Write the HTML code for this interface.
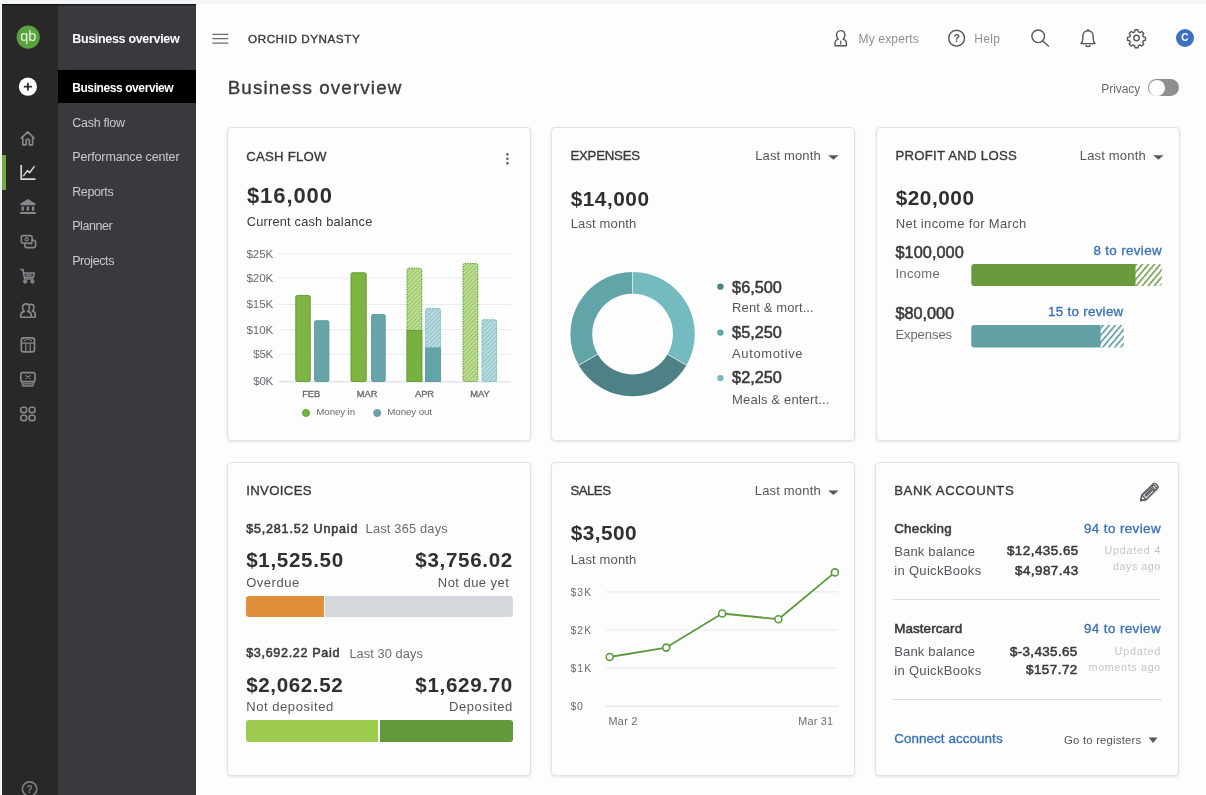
<!DOCTYPE html>
<html lang="en">
<head>
<meta charset="utf-8">
<title>Business overview</title>
<style>
*{box-sizing:border-box;margin:0;padding:0}
html,body{width:1206px;height:795px;overflow:hidden}
body{position:relative;background:#fdfdfd;font-family:"Liberation Sans",sans-serif;color:#393a3d}
.abs{position:absolute}
.t{position:absolute;white-space:nowrap;line-height:1;transform:translateY(-50%)}
#topstrip{left:0;top:0;width:1206px;height:4px;background:#f1f5f6}
#leftstrip{left:0;top:0;width:2px;height:795px;background:#f1f5f6}
#sb1{left:2px;top:4px;width:56px;height:791px;background:#282828}
#sb2{left:58px;top:4px;width:138px;height:791px;background:#393a3d}
#sbshadow{left:2px;top:4px;width:194px;height:2px;background:linear-gradient(#0c0c0c,rgba(12,12,12,0))}
#active{left:58px;top:70px;width:138px;height:33px;background:#000}
#activebar{left:2px;top:154.5px;width:3.6px;height:35px;background:#6fae3e}
.card{position:absolute;width:304px;height:314px;background:#fdfdfe;border:1px solid #e2e3e8;border-radius:4px;box-shadow:0 1px 3px rgba(0,0,0,.10)}
.bar{position:absolute;border-radius:3px;overflow:hidden}
.hr{position:absolute;height:1px;background:#dcdde0}
#gfx{position:absolute;left:0;top:0;width:1206px;height:795px;overflow:visible}
</style>
</head>
<body>
<div class="abs" id="topstrip"></div>
<div class="abs" id="leftstrip"></div>
<div class="abs" id="sb1"></div>
<div class="abs" id="sb2"></div>
<div class="abs" id="sbshadow"></div>
<div class="abs" id="active"></div>
<div class="abs" id="activebar"></div>

<div class="card" style="left:227px;top:127px"></div>
<div class="card" style="left:551px;top:127px"></div>
<div class="card" style="left:875.5px;top:127px"></div>
<div class="card" style="left:227px;top:462px"></div>
<div class="card" style="left:551px;top:462px"></div>
<div class="card" style="left:875px;top:462px"></div>

<!-- privacy toggle + avatar -->
<div class="abs" style="left:1147.8px;top:78.7px;width:31.6px;height:17.6px;border-radius:9px;background:#8e8e90"></div>
<div class="abs" style="left:1148.6px;top:79.5px;width:16px;height:16px;border-radius:8px;background:#fff"></div>
<div class="abs" style="left:1175.8px;top:29.2px;width:18px;height:18px;border-radius:9px;background:#3e6fc2"></div>

<!-- invoices bars -->
<div class="bar" style="left:245.7px;top:595.6px;width:267.1px;height:21.2px;background:#fff"><div class="abs" style="left:0;top:0;width:78px;height:100%;background:#e0903a"></div><div class="abs" style="left:79.4px;top:0;right:0;height:100%;background:#d4d7dc"></div></div>
<div class="bar" style="left:245.7px;top:720px;width:267.1px;height:21.9px;background:#fff"><div class="abs" style="left:0;top:0;width:132.8px;height:100%;background:#9ccb4d"></div><div class="abs" style="left:134.3px;top:0;right:0;height:100%;background:#62993c"></div></div>

<!-- bank dividers -->
<div class="hr" style="left:893px;top:599px;width:267px"></div>
<div class="hr" style="left:893px;top:698.5px;width:269px"></div>

<div id="layer" style="position:absolute;left:0;top:0;width:1206px;height:795px;will-change:transform">
<svg id="gfx" width="1206" height="795" viewBox="0 0 1206 795">
<defs>
<pattern id="hg" width="3" height="3" patternUnits="userSpaceOnUse" patternTransform="rotate(45)"><rect width="3" height="3" fill="#c3e09c"/><rect width="1.3" height="3" fill="#97c765"/></pattern>
<pattern id="ht" width="3" height="3" patternUnits="userSpaceOnUse" patternTransform="rotate(45)"><rect width="3" height="3" fill="#bfe0e3"/><rect width="1.3" height="3" fill="#8fc3c8"/></pattern>
<pattern id="pg" width="4.6" height="4.6" patternUnits="userSpaceOnUse" patternTransform="rotate(40)"><rect width="4.6" height="4.6" fill="#fff"/><rect width="1.5" height="4.6" fill="#6a9a3e"/></pattern>
<pattern id="pt" width="4.6" height="4.6" patternUnits="userSpaceOnUse" patternTransform="rotate(40)"><rect width="4.6" height="4.6" fill="#fff"/><rect width="1.5" height="4.6" fill="#4f9297"/></pattern>
</defs>

<!-- CASH FLOW chart -->
<g stroke="#e9eaed" stroke-width="1">
<path d="M279 254H511M279 278H511M279 304.5H511M279 329.7H511M279 354.3H511"/>
<path d="M279 381.8H511" stroke="#d4d7dc"/>
</g>
<g stroke-width="1">
<rect x="295.8" y="295.4" width="14.4" height="86.1" rx="1.5" fill="#7db442" stroke="#679c37"/>
<rect x="314.6" y="320.7" width="14.3" height="60.8" rx="1.5" fill="#68a4a8" stroke="#5f9da2"/>
<rect x="351" y="272.8" width="15.2" height="108.7" rx="1.5" fill="#7db442" stroke="#679c37"/>
<rect x="371.6" y="314.5" width="13.6" height="67" rx="1.5" fill="#68a4a8" stroke="#5f9da2"/>
<rect x="407" y="268.2" width="14.8" height="113.3" rx="1.5" fill="url(#hg)" stroke="#5f9a35" stroke-dasharray="1.5 1"/>
<rect x="407" y="330.5" width="14.8" height="51" fill="#77b241" stroke="#679c37"/>
<rect x="425.6" y="308.5" width="14.8" height="73" rx="1.5" fill="url(#ht)" stroke="#6fb0b6" stroke-dasharray="1.5 1"/>
<rect x="425.6" y="348" width="14.8" height="33.5" fill="#64a3a8" stroke="#5f9da2"/>
<rect x="463" y="263.6" width="14.8" height="117.9" rx="1.5" fill="url(#hg)" stroke="#5f9a35" stroke-dasharray="1.5 1"/>
<rect x="482" y="319.7" width="14.5" height="61.8" rx="1.5" fill="url(#ht)" stroke="#6fb0b6" stroke-dasharray="1.5 1"/>
</g>
<circle cx="306" cy="413" r="3.6" fill="#74b03f" stroke="#5f9a35" stroke-width=".8"/>
<circle cx="377.2" cy="413" r="3.6" fill="#68a4a8" stroke="#5a969b" stroke-width=".8"/>
<!-- kebab -->
<g fill="#55575c"><circle cx="507.4" cy="154.2" r="1.25"/><circle cx="507.4" cy="158.7" r="1.25"/><circle cx="507.4" cy="163.2" r="1.25"/></g>

<!-- EXPENSES donut -->
<g fill="none" stroke-width="21.8" transform="translate(632.6 334.1)">
<path d="M0 -51.3A51.3 51.3 0 0 1 44.43 25.65" stroke="#74bbbf"/>
<path d="M44.43 25.65A51.3 51.3 0 0 1 -44.43 25.65" stroke="#4e8185"/>
<path d="M-44.43 25.65A51.3 51.3 0 0 1 0 -51.3" stroke="#62a5a9"/>
<path d="M0 -40V-63M34.6 20L54.6 31.5M-34.6 20L-54.6 31.5" stroke="#e9f3f3" stroke-width=".8"/>
</g>
<circle cx="720.4" cy="286.6" r="3.2" fill="#4e8185"/>
<circle cx="720.4" cy="332.6" r="3.2" fill="#62a5a9"/>
<circle cx="720.4" cy="378.1" r="3.2" fill="#74bbbf"/>
<!-- carets -->
<g fill="#55575c">
<path d="M828.1 155.2h10.5l-5.25 4.6z"/>
<path d="M1153.1 155.2h10.5l-5.25 4.6z"/>
<path d="M828.1 490.4h10.5l-5.25 4.6z"/>
<path d="M1148.7 737.4h8.8l-4.4 5.6z"/>
</g>

<!-- PROFIT AND LOSS bars -->
<path d="M1133 264.1h25.8a3 3 0 0 1 3 3v15.9a3 3 0 0 1-3 3h-25.8z" fill="url(#pg)"/>
<path d="M974.3 264.1h161.2v21.9h-161.2a3 3 0 0 1-3-3v-15.9a3 3 0 0 1 3-3z" fill="#699a3d"/>
<path d="M1098 325h22.8a3 3 0 0 1 3 3v16.4a3 3 0 0 1-3 3h-22.8z" fill="url(#pt)"/>
<path d="M974.3 325h126.3v22.4h-126.3a3 3 0 0 1-3-3v-16.4a3 3 0 0 1 3-3z" fill="#62a0a3"/>

<!-- SALES chart -->
<g stroke="#e6e8eb" stroke-width="1">
<path d="M606 591.8H838M606 629.8H838M606 667.8H838"/>
<path d="M606 706.3H838" stroke="#dcdfe2"/>
</g>
<path d="M609.7 657L666.2 647.6L722.2 613.5L778.4 619.2L834.9 572.4" fill="none" stroke="#5e9a3c" stroke-width="1.8" stroke-linejoin="round"/>
<g fill="#fff" stroke="#5e9a3c" stroke-width="1.6">
<circle cx="609.7" cy="657" r="3.5"/><circle cx="666.2" cy="647.6" r="3.5"/><circle cx="722.2" cy="613.5" r="3.5"/><circle cx="778.4" cy="619.2" r="3.5"/><circle cx="834.9" cy="572.4" r="3.5"/>
</g>
<!--ICONS_START--><!-- sidebar icons -->
<circle cx="28.2" cy="37.1" r="11.6" fill="#5aa23d"/>
<text x="28.2" y="40.9" text-anchor="middle" font-family="Liberation Sans, sans-serif" font-size="14.5" fill="#e6f3dc">qb</text>
<circle cx="27.9" cy="86.7" r="9.1" fill="#fff"/>
<path d="M27.9 83.4v6.6M24.6 86.7h6.6" stroke="#282828" stroke-width="1.7" stroke-linecap="round"/>
<g fill="none" stroke="#85878c" stroke-width="1.650" stroke-linejoin="round" stroke-linecap="round">
<!-- home -->
<path d="M21.3 138.2L27.7 131.8L34.1 138.2M22.8 137v7.8h3.3v-4.2a1.6 1.6 0 0 1 3.2 0v4.2h3.3V137"/>
<!-- bank -->
<path d="M21 204.300L27.900 200L34.800 204.300Z" fill="#85878c"/>
<path d="M22.700 206.400v4.400M27.900 206.400v4.400M33.100 206.400v4.400" stroke-width="2.300" stroke-linecap="butt"/>
<path d="M20.800 212.900h14.200" stroke-width="2"/>
<!-- money -->
<rect x="21.3" y="235.6" width="10.8" height="7.6" rx="1.6"/>
<circle cx="26.7" cy="239.4" r="1.6" stroke-width="1.2"/>
<path d="M24.8 243.2v2.6a1.8 1.8 0 0 0 1.8 1.8h7.2a1.8 1.8 0 0 0 1.8-1.8v-3.6a1.8 1.8 0 0 0-1.8-1.8h-1.6"/>
<path d="M28.4 243.8c1.2-1.2 2.6-.6 3.4.4" stroke-width="1.2"/>
<!-- cart -->
<path d="M21 269.6h2l1.6 9.4h8.4M24 273h10.2l-1 4.2h-8.6M26.4 275h4.6" />
<circle cx="25.2" cy="281.6" r="1.3"/><circle cx="32.4" cy="281.6" r="1.3"/>
<!-- people -->
<path d="M20.8 317.2v-2.2c0-2 1.6-3.2 3.6-3.6c-1.2-.8-1.8-2-1.8-3.6c0-2.4 1.4-4 3.4-4s3.4 1.6 3.4 4c0 1.600-.6 2.800-1.800 3.600c2 .4 3.600 1.600 3.600 3.600v2.200z"/>
<path d="M29.6 304.6c.4-.2 .9-.3 1.400-.3c1.800 0 3 1.400 3 3.500c0 1.400-.6 2.500-1.600 3.200c1.700.4 2.800 1.400 2.800 3.200v3h-2.800"/>
<!-- calendar -->
<rect x="21.3" y="337.9" width="13.2" height="14" rx="2.4"/>
<path d="M21.3 343.2h13.200M25.800 343.200v8.700M30.200 343.200v8.700" stroke-width="1.200"/>
<path d="M24.200 340.800c2-1.400 5.400-1.400 7.400 0" stroke-width="1.200"/>
<!-- monitor -->
<rect x="20.800" y="372.600" width="14.200" height="9" rx="1.800"/>
<path d="M21.600 381.600l1.400 4.400h9.800l1.400-4.400M23 383.900h9.800" stroke-width="1.300"/>
<path d="M25.600 378.600l4.600-3M25.600 375.600l4.600 3" stroke-width="1.100"/>
<!-- grid -->
<rect x="20.800" y="407.200" width="5.800" height="5.400" rx="2.200"/>
<rect x="29.200" y="407.200" width="5.800" height="5.400" rx="2.200"/>
<rect x="20.800" y="415.200" width="5.800" height="5.400" rx="2.200"/>
<rect x="29.200" y="415.200" width="5.800" height="5.400" rx="2.200"/>
<!-- bottom help -->
<circle cx="29.600" cy="789" r="7.200" stroke="#7e7f83"/>
</g>
<text x="29.600" y="792.800" text-anchor="middle" font-family="Liberation Sans, sans-serif" font-weight="bold" font-size="10" fill="#7e7f83">?</text>
<!-- active chart icon -->
<g fill="none" stroke="#d6d8dc" stroke-width="1.700" stroke-linejoin="round" stroke-linecap="round">
<path d="M21.200 165.600v13.600h13.600"/>
<path d="M23.600 175.600l3.800-5l2.200 2.200l4.600-6.200" stroke-width="1.500"/>
</g>
<!-- topbar icons -->
<g stroke="#6b6c72" stroke-width="1.300" fill="none">
<path d="M212.400 34.300h15.900M212.400 38.700h15.900M212.400 43.200h15.900"/>
</g>
<g fill="none" stroke="#55575c" stroke-width="1.400" stroke-linejoin="round" stroke-linecap="round">
<!-- person -->
<path d="M835 45.800v-2.400c0-2.200 1.400-3.600 3.400-4.200c-1.200-.9-1.900-2.300-1.900-4c0-2.700 1.700-4.600 4.200-4.600s4.200 1.900 4.200 4.600c0 1.700-.7 3.100-1.900 4c2 .6 3.400 2 3.400 4.200v2.400z"/>
<path d="M840.700 41v3" stroke-width="1.200"/>
<!-- help -->
<circle cx="956.600" cy="38.200" r="7.900"/>
<!-- search -->
<circle cx="1038.200" cy="36.300" r="6.300"/>
<path d="M1042.800 40.900l5.600 5.200"/>
<!-- bell -->
<path d="M1081 43.600c1.400-1.200 1.800-2.800 1.800-5.200v-2.200c0-3.200 2.200-5.400 5.200-5.400s5.200 2.200 5.200 5.400v2.200c0 2.400.4 4 1.800 5.200z"/>
<path d="M1088 29.400v1.400M1086 45.200a2.100 2.100 0 0 0 4 0"/>
<!-- gear -->
<circle cx="1136.500" cy="38" r="2.700"/>
<path d="M1135.100 29.800h2.800l.5 2.100l1.500.7l1.900-1.100l2 2l-1.100 1.900l.7 1.500l2.100.5v2.800l-2.100.5l-.7 1.500l1.100 1.900l-2 2l-1.900-1.100l-1.500.7l-.5 2.100h-2.800l-.5-2.100l-1.500-.7l-1.900 1.100l-2-2l1.100-1.900l-.7-1.500l-2.100-.5v-2.800l2.100-.5l.7-1.500l-1.100-1.900l2-2l1.900 1.100l1.500-.7z"/>
<!-- pencil -->
<path d="M1140.600 500.800l1.400-5l9.800-9.800a2.200 2.200 0 0 1 3.100 0l1 1a2.200 2.200 0 0 1 0 3.100l-9.800 9.800zM1142.300 495.600l3.600 3.600M1150.400 487.400l3.600 3.600M1145.200 496l7-7" stroke-width="1.300"/>
</g>
<!-- pencil -->
<g transform="translate(1140.1 500.9) rotate(-44)" fill="none" stroke="#66676c" stroke-width="1.5" stroke-linejoin="round" stroke-linecap="round">
<path d="M0.6 0L5.2 -3.1H21a2.2 2.2 0 0 1 2.200 2.200V0.900a2.200 2.200 0 0 1-2.200 2.200H5.200Z"/>
<path d="M18.500 -3.100V3.100"/>
<rect x="7.600" y="-1.100" width="8.600" height="2.200" rx="1.100" stroke-width="1"/>
<path d="M0.6 0L2.8 -1.3V1.3Z" fill="#66676c" stroke-width=".8"/>
</g>
<text x="956.600" y="42" text-anchor="middle" font-family="Liberation Sans, sans-serif" font-weight="bold" font-size="10.500" fill="#55575c">?</text>
<!--ICONS_END-->
</svg>

<div class="t" style="font-size:12.5px;color:#ffffff;top:38.80px;font-weight:bold;letter-spacing:-0.316px;left:72.2px;">Business overview</div>
<div class="t" style="font-size:12px;color:#ffffff;top:88.00px;font-weight:bold;letter-spacing:-0.410px;left:72.2px;">Business overview</div>
<div class="t" style="font-size:12.5px;color:#c8cace;top:122.90px;letter-spacing:-0.261px;left:72.2px;">Cash flow</div>
<div class="t" style="font-size:12.5px;color:#c8cace;top:157.40px;letter-spacing:-0.140px;left:72.2px;">Performance center</div>
<div class="t" style="font-size:12.5px;color:#c8cace;top:191.90px;letter-spacing:-0.380px;left:72.2px;">Reports</div>
<div class="t" style="font-size:12.5px;color:#c8cace;top:226.10px;letter-spacing:-0.432px;left:72.2px;">Planner</div>
<div class="t" style="font-size:12.5px;color:#c8cace;top:260.60px;letter-spacing:-0.422px;left:72.2px;">Projects</div>
<div class="t" style="font-size:11.7px;color:#393a3d;top:39.20px;-webkit-text-stroke:.35px currentColor;letter-spacing:0.549px;left:248px;">ORCHID DYNASTY</div>
<div class="t" style="font-size:18.8px;color:#393a3d;top:87.80px;-webkit-text-stroke:.35px currentColor;letter-spacing:1.128px;left:227.7px;">Business overview</div>
<div class="t" style="font-size:12px;color:#8d9096;top:39.00px;letter-spacing:0.168px;left:858.5px;">My experts</div>
<div class="t" style="font-size:12px;color:#8d9096;top:39.00px;letter-spacing:0.371px;left:974.2px;">Help</div>
<div class="t" style="font-size:12px;color:#6b6c72;top:89.00px;letter-spacing:-0.057px;left:1101.3px;">Privacy</div>
<div class="t" style="font-size:10px;color:#ffffff;top:38.20px;font-weight:bold;left:1184.8px;transform:translate(-50%,-50%);">C</div>
<div class="t" style="font-size:13.2px;color:#393a3d;top:157.10px;-webkit-text-stroke:.35px currentColor;letter-spacing:0.237px;left:246.2px;">CASH FLOW</div>
<div class="t" style="font-size:22px;color:#2f3033;top:196.00px;font-weight:bold;letter-spacing:0.928px;left:246.9px;">$16,000</div>
<div class="t" style="font-size:12.8px;color:#393a3d;top:221.60px;letter-spacing:0.208px;left:246.7px;">Current cash balance</div>
<div class="t" style="font-size:11.6px;color:#6b6c72;top:253.70px;letter-spacing:-0.059px;right:932.76px;">$25K</div>
<div class="t" style="font-size:11.6px;color:#6b6c72;top:277.80px;letter-spacing:-0.059px;right:932.76px;">$20K</div>
<div class="t" style="font-size:11.6px;color:#6b6c72;top:304.30px;letter-spacing:-0.059px;right:932.76px;">$15K</div>
<div class="t" style="font-size:11.6px;color:#6b6c72;top:329.50px;letter-spacing:-0.059px;right:932.76px;">$10K</div>
<div class="t" style="font-size:11.6px;color:#6b6c72;top:354.10px;letter-spacing:-0.270px;right:932.97px;">$5K</div>
<div class="t" style="font-size:11.6px;color:#6b6c72;top:381.30px;letter-spacing:-0.270px;right:932.97px;">$0K</div>
<div class="t" style="font-size:9.3px;color:#6b6c72;top:394.90px;-webkit-text-stroke:.35px currentColor;left:311.2px;transform:translate(-50%,-50%);">FEB</div>
<div class="t" style="font-size:9.3px;color:#6b6c72;top:394.90px;-webkit-text-stroke:.35px currentColor;left:367.2px;transform:translate(-50%,-50%);">MAR</div>
<div class="t" style="font-size:9.3px;color:#6b6c72;top:394.90px;-webkit-text-stroke:.35px currentColor;left:424.5px;transform:translate(-50%,-50%);">APR</div>
<div class="t" style="font-size:9.3px;color:#6b6c72;top:394.90px;-webkit-text-stroke:.35px currentColor;left:480px;transform:translate(-50%,-50%);">MAY</div>
<div class="t" style="font-size:9.8px;color:#6b6c72;top:412.20px;letter-spacing:-0.138px;left:316.3px;">Money in</div>
<div class="t" style="font-size:9.8px;color:#6b6c72;top:412.20px;letter-spacing:-0.119px;left:387.3px;">Money out</div>
<div class="t" style="font-size:13.2px;color:#393a3d;top:155.80px;-webkit-text-stroke:.35px currentColor;letter-spacing:-0.201px;left:570.4px;">EXPENSES</div>
<div class="t" style="font-size:13px;color:#55575c;top:154.60px;letter-spacing:0.130px;left:755.2px;">Last month</div>
<div class="t" style="font-size:20.8px;color:#2f3033;top:198.80px;font-weight:bold;letter-spacing:0.519px;left:570.7px;">$14,000</div>
<div class="t" style="font-size:13px;color:#55575c;top:223.00px;letter-spacing:0.141px;left:570.7px;">Last month</div>
<div class="t" style="font-size:16.3px;color:#393a3d;top:286.50px;-webkit-text-stroke:.55px currentColor;letter-spacing:-0.003px;left:732.1px;">$6,500</div>
<div class="t" style="font-size:13px;color:#55575c;top:306.90px;letter-spacing:0.107px;left:732.1px;">Rent &amp; mort...</div>
<div class="t" style="font-size:16.3px;color:#393a3d;top:331.60px;-webkit-text-stroke:.55px currentColor;letter-spacing:-0.003px;left:732.1px;">$5,250</div>
<div class="t" style="font-size:13px;color:#55575c;top:352.50px;letter-spacing:0.595px;left:732.1px;">Automotive</div>
<div class="t" style="font-size:16.3px;color:#393a3d;top:377.40px;-webkit-text-stroke:.55px currentColor;letter-spacing:-0.003px;left:732.1px;">$2,250</div>
<div class="t" style="font-size:13px;color:#55575c;top:398.50px;letter-spacing:0.165px;left:732.1px;">Meals &amp; entert...</div>
<div class="t" style="font-size:13.2px;color:#393a3d;top:155.90px;-webkit-text-stroke:.35px currentColor;letter-spacing:0.261px;left:895.4px;">PROFIT AND LOSS</div>
<div class="t" style="font-size:13px;color:#55575c;top:154.60px;letter-spacing:0.175px;left:1079.8px;">Last month</div>
<div class="t" style="font-size:20.8px;color:#2f3033;top:197.70px;font-weight:bold;letter-spacing:0.519px;left:895.7px;">$20,000</div>
<div class="t" style="font-size:13px;color:#55575c;top:223.00px;letter-spacing:0.333px;left:895.7px;">Net income for March</div>
<div class="t" style="font-size:16.3px;color:#393a3d;top:252.00px;-webkit-text-stroke:.55px currentColor;letter-spacing:0.068px;left:895.4px;">$100,000</div>
<div class="t" style="font-size:13.4px;color:#3a72b8;top:251.10px;-webkit-text-stroke:.35px currentColor;letter-spacing:0.345px;right:44.06px;">8 to review</div>
<div class="t" style="font-size:13px;color:#6b6c72;top:273.20px;letter-spacing:0.332px;left:895.4px;">Income</div>
<div class="t" style="font-size:16.3px;color:#393a3d;top:312.80px;-webkit-text-stroke:.55px currentColor;letter-spacing:-0.027px;left:895.4px;">$80,000</div>
<div class="t" style="font-size:13.4px;color:#3a72b8;top:312.30px;-webkit-text-stroke:.35px currentColor;letter-spacing:0.291px;right:82.41px;">15 to review</div>
<div class="t" style="font-size:13px;color:#6b6c72;top:334.20px;letter-spacing:-0.056px;left:895.4px;">Expenses</div>
<div class="t" style="font-size:13.2px;color:#393a3d;top:490.90px;-webkit-text-stroke:.35px currentColor;letter-spacing:0.338px;left:246.2px;">INVOICES</div>
<div class="t" style="font-size:12.6px;color:#393a3d;top:529.00px;-webkit-text-stroke:.55px currentColor;letter-spacing:0.784px;left:246.2px;">$5,281.52 Unpaid</div>
<div class="t" style="font-size:12.8px;color:#6b6c72;top:528.50px;letter-spacing:0.201px;left:365.6px;">Last 365 days</div>
<div class="t" style="font-size:20.6px;color:#2f3033;top:560.40px;font-weight:bold;letter-spacing:0.672px;left:246.2px;">$1,525.50</div>
<div class="t" style="font-size:20.6px;color:#2f3033;top:560.40px;font-weight:bold;letter-spacing:0.672px;right:693.03px;">$3,756.02</div>
<div class="t" style="font-size:13px;color:#55575c;top:581.60px;letter-spacing:0.521px;left:246.2px;">Overdue</div>
<div class="t" style="font-size:13px;color:#55575c;top:581.60px;letter-spacing:0.450px;right:696.75px;">Not due yet</div>
<div class="t" style="font-size:12.6px;color:#393a3d;top:653.10px;-webkit-text-stroke:.55px currentColor;letter-spacing:0.659px;left:246.2px;">$3,692.22 Paid</div>
<div class="t" style="font-size:12.8px;color:#6b6c72;top:653.50px;letter-spacing:0.075px;left:349.4px;">Last 30 days</div>
<div class="t" style="font-size:20.6px;color:#2f3033;top:685.00px;font-weight:bold;letter-spacing:0.609px;left:246.2px;">$2,062.52</div>
<div class="t" style="font-size:20.6px;color:#2f3033;top:685.00px;font-weight:bold;letter-spacing:0.672px;right:693.03px;">$1,629.70</div>
<div class="t" style="font-size:13px;color:#55575c;top:706.20px;letter-spacing:0.564px;left:246.2px;">Not deposited</div>
<div class="t" style="font-size:13px;color:#55575c;top:706.20px;letter-spacing:0.607px;right:693.09px;">Deposited</div>
<div class="t" style="font-size:13.2px;color:#393a3d;top:491.10px;-webkit-text-stroke:.35px currentColor;letter-spacing:-0.483px;left:570.4px;">SALES</div>
<div class="t" style="font-size:13px;color:#55575c;top:489.80px;letter-spacing:0.175px;left:754.8px;">Last month</div>
<div class="t" style="font-size:20.8px;color:#2f3033;top:533.40px;font-weight:bold;letter-spacing:0.458px;left:570.7px;">$3,500</div>
<div class="t" style="font-size:13px;color:#55575c;top:558.80px;letter-spacing:0.141px;left:570.7px;">Last month</div>
<div class="t" style="font-size:10.4px;color:#6b6c72;top:592.50px;letter-spacing:1.100px;left:570.4px;">$3K</div>
<div class="t" style="font-size:10.4px;color:#6b6c72;top:630.80px;letter-spacing:1.100px;left:570.4px;">$2K</div>
<div class="t" style="font-size:10.4px;color:#6b6c72;top:668.60px;letter-spacing:1.100px;left:570.4px;">$1K</div>
<div class="t" style="font-size:10.4px;color:#6b6c72;top:706.90px;letter-spacing:0.938px;left:570.4px;">$0</div>
<div class="t" style="font-size:10.8px;color:#6b6c72;top:720.90px;letter-spacing:0.373px;left:608.5px;">Mar 2</div>
<div class="t" style="font-size:10.8px;color:#6b6c72;top:720.90px;letter-spacing:0.238px;right:372.66px;">Mar 31</div>
<div class="t" style="font-size:13.2px;color:#393a3d;top:490.90px;-webkit-text-stroke:.35px currentColor;letter-spacing:0.562px;left:894.2px;">BANK ACCOUNTS</div>
<div class="t" style="font-size:13.4px;color:#393a3d;top:529.00px;-webkit-text-stroke:.55px currentColor;letter-spacing:0.225px;left:894.2px;">Checking</div>
<div class="t" style="font-size:13.4px;color:#3a72b8;top:529.00px;-webkit-text-stroke:.35px currentColor;letter-spacing:0.400px;right:45.00px;">94 to review</div>
<div class="t" style="font-size:13px;color:#55575c;top:550.50px;letter-spacing:0.184px;left:894.2px;">Bank balance</div>
<div class="t" style="font-size:13.4px;color:#393a3d;top:551.30px;-webkit-text-stroke:.55px currentColor;letter-spacing:0.485px;right:127.21px;">$12,435.65</div>
<div class="t" style="font-size:10.8px;color:#c3c5c9;top:550.10px;letter-spacing:0.734px;right:44.97px;">Updated 4</div>
<div class="t" style="font-size:13px;color:#55575c;top:569.90px;letter-spacing:0.326px;left:894.2px;">in QuickBooks</div>
<div class="t" style="font-size:13.4px;color:#393a3d;top:570.70px;-webkit-text-stroke:.55px currentColor;letter-spacing:0.465px;right:127.23px;">$4,987.43</div>
<div class="t" style="font-size:10.8px;color:#c3c5c9;top:565.90px;letter-spacing:0.496px;right:45.20px;">days ago</div>
<div class="t" style="font-size:13.4px;color:#393a3d;top:628.70px;-webkit-text-stroke:.55px currentColor;letter-spacing:0.102px;left:894.2px;">Mastercard</div>
<div class="t" style="font-size:13.4px;color:#3a72b8;top:629.40px;-webkit-text-stroke:.35px currentColor;letter-spacing:0.400px;right:45.00px;">94 to review</div>
<div class="t" style="font-size:13px;color:#55575c;top:650.70px;letter-spacing:0.184px;left:894.2px;">Bank balance</div>
<div class="t" style="font-size:13.4px;color:#393a3d;top:651.50px;-webkit-text-stroke:.55px currentColor;letter-spacing:0.374px;right:128.33px;">$-3,435.65</div>
<div class="t" style="font-size:10.8px;color:#c3c5c9;top:651.10px;letter-spacing:0.812px;right:44.89px;">Updated</div>
<div class="t" style="font-size:13px;color:#55575c;top:669.60px;letter-spacing:0.326px;left:894.2px;">in QuickBooks</div>
<div class="t" style="font-size:13.4px;color:#393a3d;top:670.40px;-webkit-text-stroke:.55px currentColor;letter-spacing:0.482px;right:128.22px;">$157.72</div>
<div class="t" style="font-size:10.8px;color:#c3c5c9;top:667.30px;letter-spacing:0.638px;right:45.06px;">moments ago</div>
<div class="t" style="font-size:13.4px;color:#3a72b8;top:738.60px;-webkit-text-stroke:.35px currentColor;letter-spacing:0.080px;left:894.2px;">Connect accounts</div>
<div class="t" style="font-size:11.4px;color:#55575c;top:740.90px;letter-spacing:0.171px;left:1064.1px;">Go to registers</div>
</div>
</body>
</html>
